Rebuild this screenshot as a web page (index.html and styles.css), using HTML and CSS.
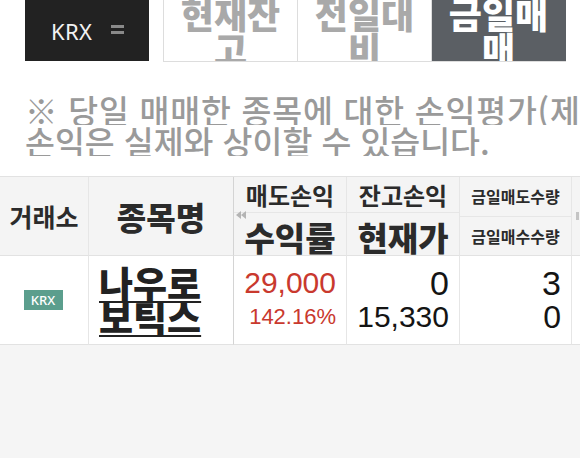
FILE: index.html
```html
<!DOCTYPE html>
<html lang="ko">
<head>
<meta charset="utf-8">
<link rel="stylesheet" href="styles.css">
</head>
<body>
<div class="page">
  <div class="topbar">
    <div class="market">
      <span class="market-name">KRX</span>
      <span class="menu-ico"><i></i><i></i></span>
    </div>
    <div class="tabs">
      <div class="tab"><span>현재잔고</span></div>
      <div class="tab"><span>전일대비</span></div>
      <div class="tab active"><span>금일매매</span></div>
    </div>
  </div>

  <div class="notice">
    <div class="notice-line first">※ 당일 매매한 종목에 대한 손익평가(제비용 미포함)로 실제</div>
    <div class="notice-line">손익은 실제와 상이할 수 있습니다.</div>
  </div>

  <div class="grid">
    <div class="th th-market">거래소</div>
    <div class="th th-name">종목명</div>
    <div class="th stack">
      <svg class="scroll-left" width="10" height="8" viewBox="0 0 10 8"><path d="M5 0 L0 4 L5 8 Z M10 0 L5 4 L10 8 Z" fill="#b4b4b4"/></svg>
      <div class="sub mid">매도손익</div>
      <div class="sub big">수익률</div>
    </div>
    <div class="th stack">
      <div class="sub mid">잔고손익</div>
      <div class="sub big">현재가</div>
    </div>
    <div class="th stack">
      <div class="sub small">금일매도수량</div>
      <div class="sub small">금일매수수량</div>
    </div>
    <div class="th th-more"><span class="more-mark"></span></div>

    <div class="td td-market"><span class="badge">KRX</span></div>
    <div class="td td-name"><span class="stock-name">나우로보틱스</span></div>
    <div class="td num">
      <div class="v-big red">29,000</div>
      <div class="v-small red">142.16%</div>
    </div>
    <div class="td num">
      <div class="v-xl">0</div>
      <div class="v-big">15,330</div>
    </div>
    <div class="td num">
      <div class="v-xl">3</div>
      <div class="v-xl2">0</div>
    </div>
    <div class="td td-more"></div>
  </div>
</div>
</body>
</html>
```

FILE: styles.css
```css
html, body {
  margin: 0;
  padding: 0;
}
body {
  width: 580px;
  height: 458px;
  overflow: hidden;
  background: #f5f5f5;
  font-family: "Noto Sans CJK KR", "Noto Sans", sans-serif;
}
.page {
  background: #ffffff;
}

/* top bar */
.topbar {
  display: flex;
  height: 62px;
  padding: 0 14px 0 25px;
  gap: 14px;
}
.market {
  width: 124px;
  height: 61px;
  background: #222222;
  display: flex;
  align-items: center;
  padding-left: 26px;
  box-sizing: border-box;
  gap: 19px;
}
.market-name {
  color: #f2f2f2;
  font-family: "Noto Sans", sans-serif;
  font-size: 22px;
  letter-spacing: 0.3px;
}
.menu-ico {
  display: flex;
  flex-direction: column;
  gap: 3px;
  width: 13px;
  margin-top: -2px;
}
.menu-ico i {
  display: block;
  height: 3px;
  background: #8a8a8a;
}
.tabs {
  flex: 1;
  display: flex;
  border-bottom: 1px solid #dddddd;
  border-left: 1px solid #dddddd;
}
.tab {
  flex: 1;
  display: flex;
  align-items: center;
  justify-content: center;
  overflow: hidden;
  border-right: 1px solid #dddddd;
  padding: 0 10px;
  box-sizing: border-box;
  height: 61px;
  color: #a9a9a9;
  font-size: 36px;
  font-weight: 900;
  line-height: 35px;
  text-align: center;
}
.tab.active {
  background: #5b5f64;
  color: #ffffff;
  border-right-color: #5b5f64;
}

/* notice */
.notice {
  margin: 32px 0 0 0;
  padding-left: 25px;
  color: #9a9a9a;
  font-size: 32.5px;
  font-weight: 500;
  line-height: 31px;
}
.notice-line {
  white-space: nowrap;
  overflow: hidden;
}
.notice-line.first {
  letter-spacing: 0.8px;
}

/* table */
.grid {
  margin-top: 20px;
  display: grid;
  grid-template-columns: 89px 145px 113px 113px 112px 1fr;
  grid-template-rows: 79px 89px;
  border-top: 1px solid #e2e2e2;
  background: #f5f5f5;
}
.th, .td {
  box-sizing: border-box;
  border-right: 1px solid #e6e6e6;
  border-bottom: 1px solid #e2e2e2;
}
.th {
  background: #f4f4f4;
  color: #2b2b2b;
  display: flex;
  align-items: center;
  justify-content: center;
  position: relative;
}
.th-market {
  font-size: 25px;
  font-weight: 700;
}
.th-name {
  font-size: 32px;
  font-weight: 900;
  border-right-color: #d4d4d4;
}
.th.stack {
  flex-direction: column;
  align-items: stretch;
  justify-content: stretch;
}
.sub {
  flex: 1;
  display: flex;
  align-items: center;
  justify-content: center;
}
.sub:first-of-type {
  border-bottom: 1px solid #e6e6e6;
}
.sub.mid {
  font-size: 24px;
  font-weight: 700;
}
.sub.big {
  font-size: 33px;
  font-weight: 900;
}
.sub.small {
  font-size: 16px;
  font-weight: 700;
}
.scroll-left {
  position: absolute;
  left: 2px;
  top: 34px;
}
.th-more {
  border-right: none;
}
.more-mark {
  position: absolute;
  left: 4px;
  top: 35px;
  width: 3px;
  height: 8px;
  background: #c4c4c4;
}

.td {
  background: #ffffff;
}
.td-market {
  display: flex;
  align-items: center;
  justify-content: center;
}
.badge {
  display: inline-block;
  background: #5b9e8d;
  color: #ffffff;
  font-family: "Noto Sans", sans-serif;
  font-size: 13px;
  font-weight: 500;
  line-height: 20px;
  width: 39px;
  text-align: center;
  margin-left: -2px;
}
.td-name {
  border-right-color: #d4d4d4;
  display: flex;
  align-items: center;
  padding-left: 10px;
  padding-right: 10px;
}
.stock-name {
  font-size: 37px;
  font-weight: 900;
  line-height: 34px;
  color: #222222;
  text-decoration: underline;
  text-decoration-thickness: 1.5px;
  text-underline-offset: 2px;
}
.td.num {
  display: flex;
  flex-direction: column;
  justify-content: center;
  align-items: flex-end;
  padding-right: 10px;
  font-family: "Liberation Sans", Arial, sans-serif;
  color: #141414;
}
.td.num > div {
  line-height: 34px;
}
.v-big {
  font-size: 30px;
}
.v-small {
  font-size: 22px;
}
.v-xl {
  font-size: 34px;
}
.v-xl2 {
  font-size: 32px;
}
.red {
  color: #c9392e;
}
.td-more {
  border-right: none;
}
```
